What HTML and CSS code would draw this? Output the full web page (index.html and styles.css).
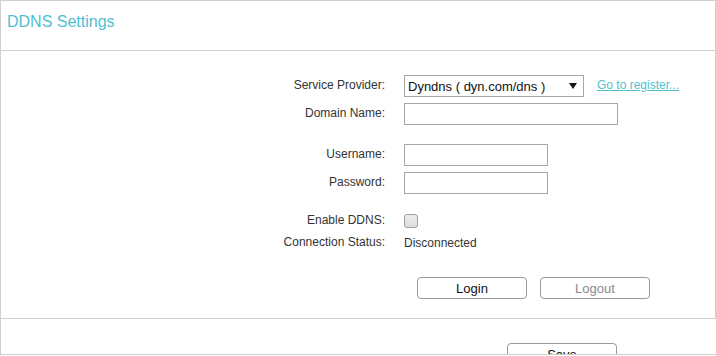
FILE: index.html
```html
<!DOCTYPE html>
<html lang="en">
<head>
    <meta charset="UTF-8">
    <meta name="viewport" content="width=device-width, initial-scale=1.0">
    <title>DDNS Settings</title>
    <link rel="stylesheet" href="styles.css">
</head>
<body>
    <div class="page">
        <div class="panel">
            <div class="panel-head">
                <h2 class="panel-title">DDNS Settings</h2>
            </div>

            <div class="panel-body">
                <div class="group">
                    <div class="row">
                        <label class="row-label" for="provider">Service Provider:</label>
                        <div class="row-field">
                            <div class="select-wrap">
                                <select id="provider" class="select">
                                    <option selected>Dyndns ( dyn.com/dns )</option>
                                    <option>NO-IP ( www.noip.com )</option>
                                </select>
                                <svg class="select-arrow" width="8" height="6" viewBox="0 0 8 6"><path d="M0 0h8L4 6z" fill="#111"/></svg>
                            </div>
                            <a class="link" href="#">Go to register...</a>
                        </div>
                    </div>
                    <div class="row">
                        <label class="row-label" for="domain">Domain Name:</label>
                        <div class="row-field">
                            <input type="text" id="domain" class="input input-wide">
                        </div>
                    </div>
                </div>

                <div class="group">
                    <div class="row">
                        <label class="row-label" for="username">Username:</label>
                        <div class="row-field">
                            <input type="text" id="username" class="input">
                        </div>
                    </div>
                    <div class="row">
                        <label class="row-label" for="password">Password:</label>
                        <div class="row-field">
                            <input type="password" id="password" class="input">
                        </div>
                    </div>
                </div>

                <div class="group">
                    <div class="row row-short">
                        <label class="row-label" for="enable">Enable DDNS:</label>
                        <div class="row-field">
                            <input type="checkbox" id="enable" class="check">
                        </div>
                    </div>
                    <div class="row row-short">
                        <span class="row-label">Connection Status:</span>
                        <div class="row-field">
                            <span class="status">Disconnected</span>
                        </div>
                    </div>
                </div>

                <div class="actions">
                    <button class="btn">Login</button>
                    <button class="btn btn-disabled">Logout</button>
                </div>
            </div>
        </div>

        <div class="footer">
            <button class="btn">Save</button>
        </div>
    </div>
</body>
</html>
```

FILE: styles.css
```css
body {
    margin: 0;
    font-family: "Liberation Sans", Arial, sans-serif;
    font-size: 12px;
    color: #333;
    background: #fff;
}
.page {
    height: 355px;
    box-sizing: border-box;
    border: 1px solid #cfcfcf;
    border-right: none;
    overflow: hidden;
}
.panel {
    border-right: 1px solid #cfcfcf;
    border-bottom: 1px solid #cfcfcf;
}
.panel-head {
    height: 50px;
    box-sizing: border-box;
    border-bottom: 1px solid #cfcfcf;
    padding: 11px 6px 0;
}
.panel-title {
    margin: 0;
    font-size: 16px;
    font-weight: normal;
    line-height: 20px;
    color: #4fbfcf;
}
.panel-body {
    padding: 21px 0 19px;
}
.group + .group {
    margin-top: 13px;
}

/* label column ends at the same x on every row */
.row {
    display: grid;
    grid-template-columns: 384px 1fr;
    column-gap: 19px;
    align-items: center;
    height: 28px;
}
.row-short {
    height: 22px;
}
.row-label {
    text-align: right;
    margin-top: -2px;
}
.row-field {
    display: flex;
    align-items: center;
}
.select-wrap {
    position: relative;
    width: 180px;
    height: 22px;
}
.select {
    appearance: none;
    -webkit-appearance: none;
    width: 100%;
    height: 22px;
    box-sizing: border-box;
    border: 1px solid #a6a6a6;
    border-radius: 0;
    background: #fff;
    padding: 0 0 0 3px;
    font-family: inherit;
    font-size: 13px;
    color: #111;
}
.select-arrow {
    position: absolute;
    top: 8px;
    right: 7px;
    pointer-events: none;
}
.link {
    margin-left: 13px;
    margin-top: -2px;
    color: #4fbfcf;
    text-decoration: underline;
}
.input {
    width: 144px;
    height: 22px;
    box-sizing: border-box;
    border: 1px solid #a6a6a6;
    padding: 0 4px;
    font-family: inherit;
    font-size: 12px;
}
.input-wide {
    width: 214px;
}
.check {
    appearance: none;
    -webkit-appearance: none;
    width: 14px;
    height: 14px;
    margin: 0;
    box-sizing: border-box;
    border: 1px solid #a0a0a0;
    border-radius: 3px;
    background: linear-gradient(#ececec, #dedede);
}
.status {
    color: #333;
}
.actions {
    display: flex;
    gap: 13px;
    margin-top: 23px;
    padding-left: 416px;
}
.btn {
    width: 110px;
    height: 22px;
    box-sizing: border-box;
    border: 1px solid #9a9a9a;
    border-radius: 4px;
    background: #fff;
    padding: 0;
    font-family: inherit;
    font-size: 13px;
    color: #111;
}
.btn-disabled {
    color: #8a8a8a;
}
.footer {
    padding: 24px 0 0 506px;
}
```
